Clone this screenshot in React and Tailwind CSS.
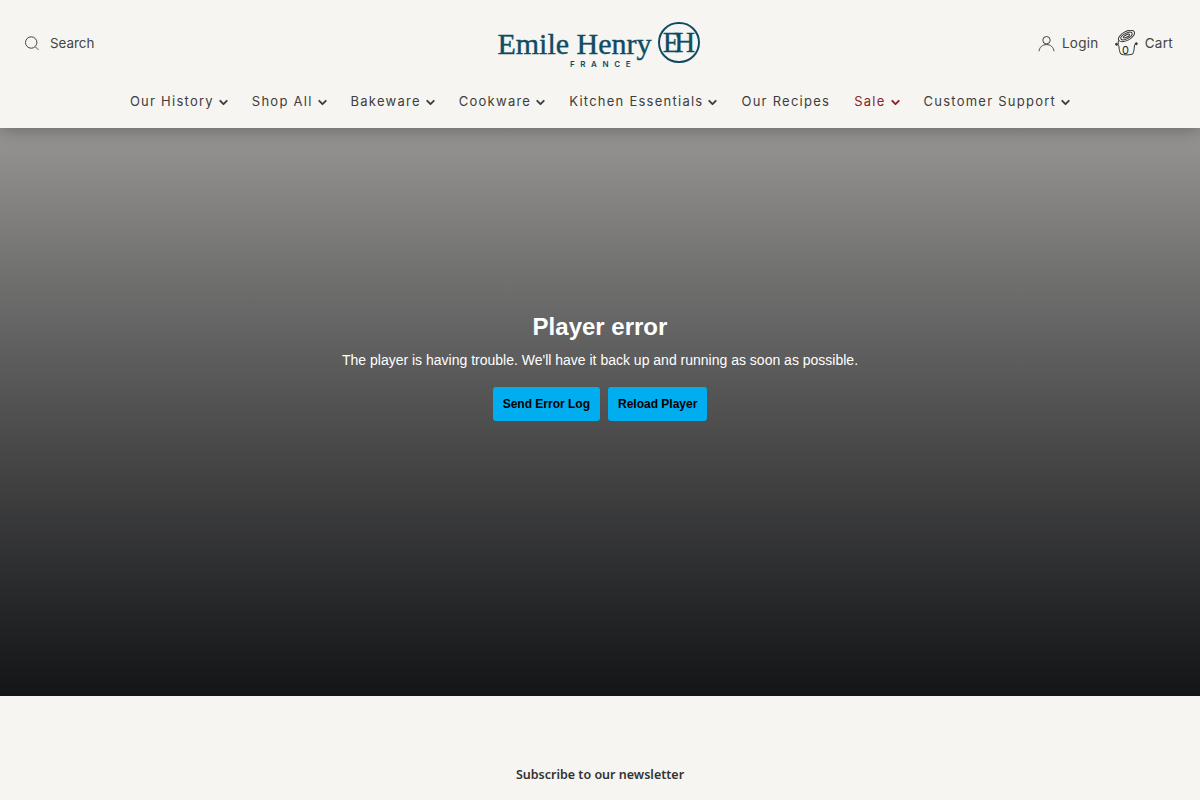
import { ChevronDown } from 'lucide-react';

const NAV_ITEMS = [
  { label: 'Our History', menu: true },
  { label: 'Shop All', menu: true },
  { label: 'Bakeware', menu: true },
  { label: 'Cookware', menu: true },
  { label: 'Kitchen Essentials', menu: true },
  { label: 'Our Recipes', menu: false },
  { label: 'Sale', menu: true, sale: true },
  { label: 'Customer Support', menu: true },
];

function SearchIcon() {
  return (
    <svg width="16" height="16" viewBox="0 0 16 16" fill="none" stroke="#444" strokeWidth="1">
      <circle cx="7.2" cy="7.5" r="5.7" />
      <path d="M11.4 11.8l3 3" />
    </svg>
  );
}

function UserIcon() {
  return (
    <svg width="17" height="17" viewBox="0 0 17 17" fill="none" stroke="#444" strokeWidth="1">
      <circle cx="8.5" cy="5.2" r="3.7" />
      <path d="M1 16.2c.5-4 3.4-6.6 7.5-6.6s7 2.600 7.500 6.600" />
    </svg>
  );
}

function CartIcon() {
  return (
    <svg width="23" height="26" viewBox="0 0 23 26" fill="none" stroke="#333" strokeWidth="1">
      <ellipse cx="11.500" cy="6" rx="8.800" ry="4.400" transform="rotate(-28 11.500 6)" />
      <ellipse cx="11.500" cy="6" rx="6.200" ry="2.700" transform="rotate(-28 11.500 6)" />
      <ellipse cx="11.500" cy="6" rx="3.400" ry="1.200" transform="rotate(-28 11.500 6)" />
      <path d="M3.500 10.500c-.3 1.500-.3 2.500-.1 4" />
      <path d="M1.500 14.500c.8.300 1.900.500 2.400 1.500.3 3.500.7 6 1.800 8 3.500 1.200 8.500 1.200 12 0 1.100-2 1.500-5 1.700-8 .1-1.500.8-2.200 2.300-2.300" />
      <circle cx="21.300" cy="13.700" r="1" fill="#333" />
      <circle cx="1.500" cy="14.300" r="1" fill="#333" />
    </svg>
  );
}

function Logo() {
  return (
    <div className="flex items-start gap-[7px] text-[#0f4c63] ml-[1px]">
      <div className="flex flex-col items-center w-[152px]">
        <span className="font-['Liberation_Serif',serif] text-[30px] leading-[34px] mt-[6px] [-webkit-text-stroke:0.4px_#0f4c63] whitespace-nowrap">
          Emile Henry
        </span>
        <span className="font-['Inter',sans-serif] text-[8px] leading-[10px] font-semibold tracking-[5.6px] mt-[-2px] ml-[57px] whitespace-nowrap">
          FRANCE
        </span>
      </div>
      <div className="w-[42px] h-[41px] mt-[1px] rounded-full border-[2.5px] border-[#0f4c63] flex items-center justify-center font-['Liberation_Serif',serif] text-[29px] leading-none tracking-[-6px] pr-[5px] [-webkit-text-stroke:0.3px_#0f4c63]">
        EH
      </div>
    </div>
  );
}

function NavItem({ item }) {
  return (
    <a className={`flex items-center gap-[3px] whitespace-nowrap ${item.sale ? 'text-[#8a1f28]' : 'text-[#3d3d3d]'}`}>
      {item.label}
      {item.menu && <ChevronDown className="w-[13px] h-[13px] mt-[3px] mr-[-2px]" strokeWidth={3.5} />}
    </a>
  );
}

function Header() {
  return (
    <header className="relative z-10 h-[128px] bg-[#f6f5f1] shadow-[0_2px_16px_rgba(0,0,0,0.3)] font-['Inter',sans-serif]">
      <div className="h-[91px] pl-[24px] pr-[27px] pt-[21px] grid grid-cols-[1fr_auto_1fr] items-start">
        <div className="flex items-center gap-[10px] h-[44px] text-[13.4px] text-[#444]">
          <SearchIcon />
          <span>Search</span>
        </div>
        <Logo />
        <div className="flex items-center justify-end gap-[16px] h-[44px] text-[13.5px] tracking-[0.3px] text-[#444]">
          <div className="flex items-center gap-[7px]">
            <UserIcon />
            <span>Login</span>
          </div>
          <div className="flex items-center gap-[7px]">
            <div className="relative">
              <CartIcon />
              <span className="absolute left-[7px] bottom-[-1px] w-[8px] text-center text-[11px] leading-[14px] text-[#222]">0</span>
            </div>
            <span>Cart</span>
          </div>
        </div>
      </div>
      <nav className="flex justify-center gap-[24px] text-[13px] leading-[20px] tracking-[1.25px]">
        {NAV_ITEMS.map((item) => (
          <NavItem key={item.label} item={item} />
        ))}
      </nav>
    </header>
  );
}

function PlayerError() {
  return (
    <section className="h-[568px] bg-gradient-to-b from-[#969593] to-[#141517] flex flex-col items-center pt-[183px] font-['Liberation_Sans',sans-serif] text-white">
      <h2 className="text-[24px] leading-[32px] font-bold">Player error</h2>
      <p className="mt-[5px] text-[14px] leading-[24px]">
        The player is having trouble. We'll have it back up and running as soon as possible.
      </p>
      <div className="mt-[15px] flex gap-[8px]">
        <button className="h-[34px] px-[10px] rounded-[3px] bg-[#00adef] text-black text-[12px] font-bold">Send Error Log</button>
        <button className="h-[34px] px-[10px] rounded-[3px] bg-[#00adef] text-black text-[12px] font-bold">Reload Player</button>
      </div>
    </section>
  );
}

export default function App() {
  return (
    <div className="h-[800px] overflow-hidden bg-[#f6f5f1]">
      <Header />
      <PlayerError />
      <footer className="pt-[69px] text-center font-['Noto_Sans',sans-serif] text-[12.5px] leading-[20px] font-semibold text-[#333]">
        Subscribe to our newsletter
      </footer>
    </div>
  );
}
